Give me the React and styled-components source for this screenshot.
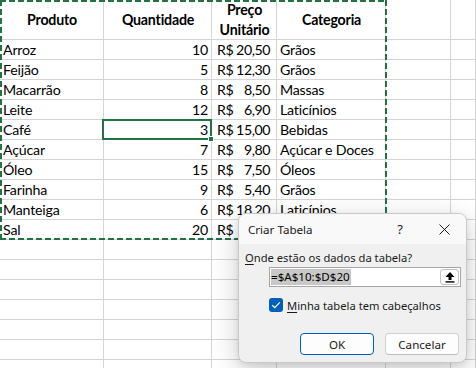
import React from "react";
import styled, { createGlobalStyle } from "styled-components";

const GRID = "#d4d4d4";
const GREEN = "#217346";
const SHEET_FONT = `Lato, "Liberation Sans", sans-serif`;
const UI_FONT = `"Noto Sans", "Open Sans", sans-serif`;

const GlobalStyle = createGlobalStyle`
  html, body {
    margin: 0;
    padding: 0;
    background: #ffffff;
    overflow: hidden;
  }
`;

const Page = styled.div`
  position: relative;
  width: 476px;
  height: 368px;
  overflow: hidden;
  background: #ffffff;
`;

const Sheet = styled.div`
  position: relative;
  display: grid;
  grid-template-columns: 104px 108px 65px 109px 65px 1fr;
  grid-template-rows: 40px repeat(17, 20px);
  font-family: ${SHEET_FONT};
  font-size: 14.2px;
  letter-spacing: -0.2px;
  color: #000;
`;

const Cell = styled.div`
  position: relative;
  box-sizing: border-box;
  border-right: 1px solid ${GRID};
  border-bottom: 1px solid ${GRID};
  padding: 0 ${(p) => (p.$align === "right" ? "3px" : "2px")} 0 3px;
  display: flex;
  align-items: ${(p) => (p.$head ? "center" : "flex-end")};
  justify-content: ${(p) =>
    p.$head ? "center" : p.$align === "right" ? "flex-end" : "flex-start"};
  text-align: ${(p) => (p.$head ? "center" : "left")};
  font-weight: ${(p) => (p.$head ? 700 : 400)};
  line-height: ${(p) => (p.$head ? "20px" : "18px")};
  white-space: nowrap;

  ${(p) =>
    p.$selected &&
    `
    &::after {
      content: "";
      position: absolute;
      left: -2px;
      right: -1px;
      top: -1px;
      bottom: -1px;
      border: 2px solid ${GREEN};
      pointer-events: none;
      z-index: 2;
    }
    &::before {
      content: "";
      position: absolute;
      right: -3px;
      bottom: -3px;
      width: 4px;
      height: 4px;
      background: ${GREEN};
      border: 1px solid #fff;
      z-index: 3;
    }
  `}
`;

const MoneyCell = styled(Cell)`
  justify-content: space-between;
  padding: 0 6px 0 5px;
  letter-spacing: -0.45px;
`;

const CopyMarquee = styled.div`
  position: absolute;
  left: 0;
  top: 0;
  width: 387px;
  height: 240px;
  pointer-events: none;
  background-image:
    repeating-linear-gradient(90deg, ${GREEN} 0 6px, transparent 6px 9px),
    repeating-linear-gradient(90deg, ${GREEN} 0 6px, transparent 6px 9px),
    repeating-linear-gradient(180deg, ${GREEN} 0 6px, transparent 6px 9px),
    repeating-linear-gradient(180deg, ${GREEN} 0 6px, transparent 6px 9px);
  background-size: 100% 2px, 100% 2px, 2px 100%, 2px 100%;
  background-position: 0 0, 0 100%, 0 0, 100% 0;
  background-repeat: no-repeat;
`;

const Dialog = styled.div`
  position: absolute;
  left: 238px;
  top: 213px;
  width: 229px;
  box-sizing: border-box;
  border: 1px solid #c9c9c9;
  border-radius: 8px;
  background: #f0f0f0;
  box-shadow: 0 8px 28px rgba(0, 0, 0, 0.2), 0 2px 6px rgba(0, 0, 0, 0.08);
  font-family: ${UI_FONT};
  font-size: 11.2px;
  color: #1a1a1a;
  overflow: hidden;
`;

const TitleBar = styled.div`
  height: 30px;
  display: flex;
  align-items: center;
  padding-left: 9px;
  background: #f9f9f9;
`;

const Title = styled.div`
  flex: 1;
  font-size: 11.6px;
`;

const TitleButton = styled.div`
  width: 44px;
  height: 30px;
  display: flex;
  align-items: center;
  justify-content: center;
  font-size: 13px;
`;

const Body = styled.div`
  display: flex;
  flex-direction: column;
  padding: 6px 5px 7px 6px;
`;

const Label = styled.div`
  line-height: 16px;
  height: 16px;
`;

const Key = styled.span`
  text-decoration: underline;
  text-underline-offset: 2px;
`;

const RangeInput = styled.div`
  margin: 1px 0 0 24px;
  height: 20px;
  box-sizing: border-box;
  border: 1px solid #a6a6a6;
  background: #fff;
  display: flex;
  align-items: center;
  justify-content: space-between;
  padding: 0 1px;
  font-size: 11.6px;
`;

const Selected = styled.span`
  background: #c8c8c8;
  line-height: 16px;
  padding-right: 1px;
  color: #000;
`;

const PickButton = styled.div`
  width: 19px;
  height: 16px;
  box-sizing: border-box;
  border: 1px solid #c4c4c4;
  border-radius: 3px;
  background: #fdfdfd;
  display: flex;
  align-items: center;
  justify-content: center;
`;

const CheckRow = styled.div`
  margin: 11px 0 0 24px;
  height: 14px;
  display: flex;
  align-items: center;
  gap: 4px;
`;

const Box = styled.div`
  width: 14px;
  height: 14px;
  border-radius: 3px;
  background: #005fb8;
  display: flex;
  align-items: center;
  justify-content: center;
`;

const Buttons = styled.div`
  margin-top: 21px;
  display: flex;
  justify-content: flex-end;
  gap: 11px;
  padding-right: 2px;
`;

const Button = styled.div`
  width: 74px;
  height: 22px;
  box-sizing: border-box;
  border: 1px solid ${(p) => (p.$primary ? "#005fb8" : "#d0d0d0")};
  border-bottom-color: ${(p) => (p.$primary ? "#005fb8" : "#bdbdbd")};
  border-radius: 4px;
  background: #fdfdfd;
  display: flex;
  align-items: center;
  justify-content: center;
  color: #1a1a1a;
  font-size: 11.6px;
`;

const rows = [
  ["Arroz", 10, "20,50", "Grãos"],
  ["Feijão", 5, "12,30", "Grãos"],
  ["Macarrão", 8, "8,50", "Massas"],
  ["Leite", 12, "6,90", "Laticínios"],
  ["Café", 3, "15,00", "Bebidas"],
  ["Açúcar", 7, "9,80", "Açúcar e Doces"],
  ["Óleo", 15, "7,50", "Óleos"],
  ["Farinha", 9, "5,40", "Grãos"],
  ["Manteiga", 6, "18,20", "Laticínios"],
  ["Sal", 20, "", ""],
];

const blankRows = 7;

export default function App() {
  return (
    <Page>
      <GlobalStyle />
      <Sheet>
        <Cell $head>Produto</Cell>
        <Cell $head>Quantidade</Cell>
        <Cell $head>
          Preço
          <br />
          Unitário
        </Cell>
        <Cell $head>Categoria</Cell>
        <Cell />
        <Cell />
        {rows.map(([name, qty, price, cat]) => (
          <React.Fragment key={name}>
            <Cell>{name}</Cell>
            <Cell $align="right" $selected={name === "Café"}>
              {qty}
            </Cell>
            <MoneyCell>
              <span>R$</span>
              <span>{price}</span>
            </MoneyCell>
            <Cell>{cat}</Cell>
            <Cell />
            <Cell />
          </React.Fragment>
        ))}
        {Array.from({ length: blankRows * 6 }).map((_, i) => (
          <Cell key={"b" + i} />
        ))}
        <CopyMarquee />
      </Sheet>

      <Dialog>
        <TitleBar>
          <Title>Criar Tabela</Title>
          <TitleButton>?</TitleButton>
          <TitleButton>
            <svg width="11" height="11" viewBox="0 0 11 11">
              <path d="M0.5 0.5 L10.5 10.5 M10.5 0.5 L0.5 10.5" stroke="#1a1a1a" strokeWidth="1" />
            </svg>
          </TitleButton>
        </TitleBar>
        <Body>
          <Label>
            <Key>O</Key>nde estão os dados da tabela?
          </Label>
          <RangeInput>
            <Selected>=$A$10:$D$20</Selected>
            <PickButton>
              <svg width="10" height="12" viewBox="0 0 10 12">
                <path d="M5 1 L9.5 6 L6.5 6 L6.5 9 L3.5 9 L3.5 6 L0.5 6 Z" fill="#000" />
                <rect x="0.5" y="10.2" width="9" height="1.4" fill="#000" />
              </svg>
            </PickButton>
          </RangeInput>
          <CheckRow>
            <Box>
              <svg width="10" height="8" viewBox="0 0 10 8">
                <path d="M1.2 4.2 L3.8 6.6 L8.8 1.4" stroke="#fff" strokeWidth="1.2" fill="none" />
              </svg>
            </Box>
            <span>
              <Key>M</Key>inha tabela tem cabeçalhos
            </span>
          </CheckRow>
          <Buttons>
            <Button $primary>OK</Button>
            <Button>Cancelar</Button>
          </Buttons>
        </Body>
      </Dialog>
    </Page>
  );
}
